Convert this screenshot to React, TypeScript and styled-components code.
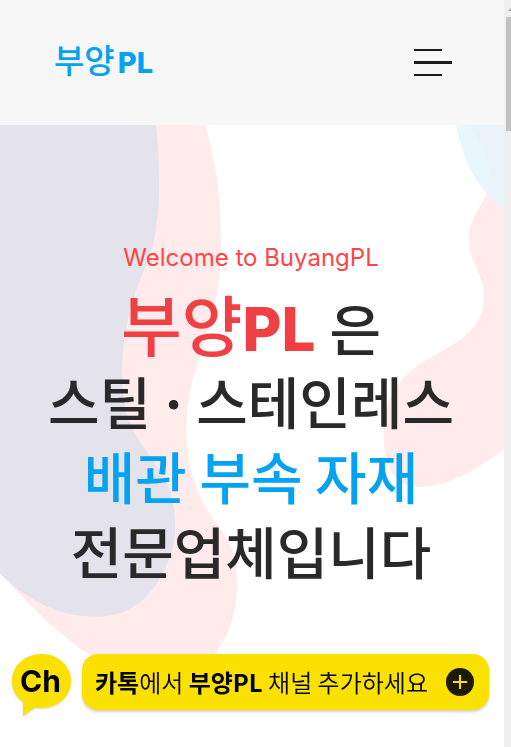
import React from "react";
import styled, { createGlobalStyle } from "styled-components";

const GlobalStyle = createGlobalStyle`
  * { box-sizing: border-box; }
  html, body { margin: 0; }
  body {
    background: #fff;
    color: #292929;
    font-family: Inter, "Noto Sans CJK KR", sans-serif;
  }
`;

const Page = styled.div`
  display: flex;
  min-height: 100vh;
`;

const Content = styled.div`
  flex: 1;
  min-width: 0;
  display: flex;
  flex-direction: column;
`;

const Header = styled.header`
  display: flex;
  align-items: center;
  justify-content: space-between;
  height: 125px;
  padding: 0 52px 0 54px;
  background: #f7f7f7;
`;

const Logo = styled.a`
  display: flex;
  align-items: baseline;
  gap: 3px;
  padding-bottom: 4px;
  color: #03a3f1;
  font: 500 33px/48px "Noto Sans CJK KR", sans-serif;
  text-decoration: none;
`;

const LogoLatin = styled.span`
  font: 800 29px/48px Inter, sans-serif;
`;

const MenuButton = styled.button`
  display: flex;
  flex-direction: column;
  justify-content: space-between;
  width: 38px;
  height: 27px;
  padding: 0;
  border: 0;
  background: none;
  cursor: pointer;
`;

const MenuLine = styled.span<{ $long?: boolean }>`
  width: ${(p) => (p.$long ? "38px" : "28px")};
  height: ${(p) => (p.$long ? "3px" : "2px")};
  background: #1c1a1d;
`;

const Hero = styled.main`
  position: relative;
  flex: 1;
  padding: 116px 2px 150px 0;
  overflow: hidden;
  text-align: center;
`;

const Shape = styled.svg<{ $side: "left" | "right" }>`
  position: absolute;
  top: 0;
  ${(p) => p.$side}: 0;
`;

const HeroText = styled.div`
  position: relative;
`;

const Welcome = styled.p`
  margin: 0;
  color: #ff4545;
  font-size: 24px;
  line-height: 34px;
`;

const Title = styled.h1`
  display: flex;
  flex-direction: column;
  align-items: center;
  margin: 12px 0 0;
  font: 500 56px/75px "Noto Sans CJK KR", sans-serif;
`;

const Line = styled.span<{ $blue?: boolean }>`
  white-space: nowrap;
  color: ${(p) => (p.$blue ? "#03a3f1" : "inherit")};
`;

const BrandLine = styled.span`
  display: flex;
  align-items: baseline;
  gap: 14px;
  height: 75px;
  line-height: 70px;
  white-space: nowrap;
`;

const Brand = styled.span`
  color: #ef4043;
  font-size: 66px;
`;

const BrandLatin = styled.span`
  font-family: Inter, sans-serif;
  font-size: 60px;
  font-weight: 800;
`;

const Dot = styled.span`
  font-family: Inter, sans-serif;
  font-weight: 700;
  line-height: 1;
`;

const ChannelBar = styled.div`
  position: fixed;
  right: 22px;
  bottom: 30px;
  left: 12px;
  display: flex;
  align-items: flex-start;
  gap: 11px;
  height: 63px;
`;

const ChannelBubble = styled.button`
  position: relative;
  width: 59px;
  height: 63px;
  padding: 0 2px 9px 0;
  border: 0;
  background: none;
  color: #000;
  font: 700 30px/54px Inter, sans-serif;
  cursor: pointer;
`;

const BubbleShape = styled.svg`
  position: absolute;
  inset: 0;
  overflow: visible;
  filter: drop-shadow(0 1px 1px rgba(0, 0, 0, 0.15));
`;

const BubbleText = styled.span`
  position: relative;
`;

const ChannelLink = styled.a`
  flex: 1;
  display: flex;
  align-items: center;
  justify-content: space-between;
  height: 56px;
  padding: 0 15px 0 13px;
  border-radius: 16px;
  background: #fae100;
  box-shadow: 0 2px 3px rgba(0, 0, 0, 0.18);
  color: #000;
  font: 350 24px/36px "Noto Sans CJK KR", sans-serif;
  text-decoration: none;
  white-space: nowrap;
`;

const Strong = styled.strong`
  font-weight: 700;
`;

const ScrollTrack = styled.div`
  width: 7px;
  padding-left: 2px;
  overflow: hidden;
  background: #f0f0f0;
`;

const ScrollArrow = styled.svg`
  display: block;
`;

const ScrollThumb = styled.div`
  height: 114px;
  background: #c1c1c1;
`;

export default function App() {
  return (
    <Page>
      <GlobalStyle />
      <Content>
        <Header>
          <Logo href="#">
            부양<LogoLatin>PL</LogoLatin>
          </Logo>
          <MenuButton type="button" aria-label="메뉴">
            <MenuLine />
            <MenuLine $long />
            <MenuLine />
          </MenuButton>
        </Header>
        <Hero>
          <Shape $side="left" width="240" height="560" viewBox="0 0 240 560" aria-hidden="true">
            <path
              fill="#ffebeb"
              d="M0 0H205C215 33 221 70 221 118C222 178 202 220 192 258C180 310 187 358 214 395C230 415 237 430 237 460C237 488 228 514 213 531C191 560 131 557 87 528C57 509 20 470 0 448Z"
            />
            <path
              fill="#e4e3ec"
              d="M0 0H156C160 34 160 74 157 96C153 135 139 148 129 190C122 220 121 251 123 266C126 311 151 326 164 352C174 370 177 397 174 416C169 443 155 466 138 479C119 493 96 493 76 490C44 485 20 467 0 449Z"
            />
          </Shape>
          <Shape $side="right" width="124" height="370" viewBox="0 0 124 370" aria-hidden="true">
            <path
              fill="#ffebeb"
              d="M124 60L107 69C98 86 89 93 89 116C89 137 104 150 104 171C104 204 79 216 55 230C26 246 14 260 7 282C-2 323 7 362 38 362C67 362 97 345 124 324Z"
            />
            <path fill="#e8f6fd" d="M76 0H124V84C98 65 83 37 76 0Z" />
            <path fill="#eaf2fa" d="M90 0H124V84L107 69C114 45 104 19 90 0Z" />
          </Shape>
          <HeroText>
            <Welcome>Welcome to BuyangPL</Welcome>
            <Title>
              <BrandLine>
                <Brand>
                  부양<BrandLatin>PL</BrandLatin>
                </Brand>
                <span>은</span>
              </BrandLine>
              <Line>
                스틸<Dot> · </Dot>스테인레스
              </Line>
              <Line $blue>배관 부속 자재</Line>
              <Line>전문업체입니다</Line>
            </Title>
          </HeroText>
        </Hero>
      </Content>
      <ScrollTrack aria-hidden="true">
        <ScrollArrow width="5" height="17" viewBox="0 0 5 17">
          <path d="M2 11L6 7V11Z" fill="#a3a3a3" />
        </ScrollArrow>
        <ScrollThumb />
      </ScrollTrack>
      <ChannelBar>
        <ChannelBubble type="button">
          <BubbleShape width="59" height="63" viewBox="0 0 59 63" aria-hidden="true">
            <path
              fill="#fae100"
              d="M29.500 0C46 0 59 12 59 27S46 54 29.500 54Q26 54 23 53.500L11 62V48C4 43 0 36 0 27C0 12 13 0 29.500 0Z"
            />
          </BubbleShape>
          <BubbleText>Ch</BubbleText>
        </ChannelBubble>
        <ChannelLink href="#">
          <span>
            <Strong>카톡</Strong>에서 <Strong>부양PL</Strong> 채널 추가하세요
          </span>
          <svg width="28" height="28" viewBox="0 0 28 28" aria-hidden="true">
            <circle cx="14" cy="14" r="14" fill="#1e1a02" />
            <path d="M14 7V21M7 14H21" stroke="#fae100" strokeWidth="2" />
          </svg>
        </ChannelLink>
      </ChannelBar>
    </Page>
  );
}
